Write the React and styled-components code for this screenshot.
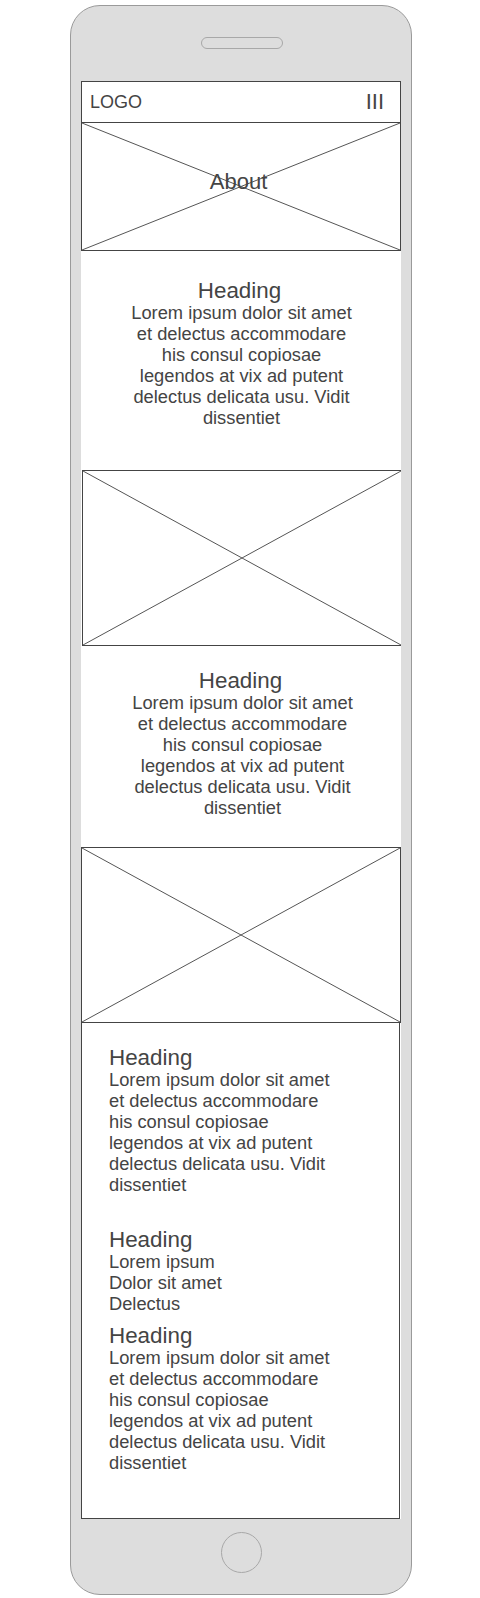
import React from "react";
import styled, { createGlobalStyle } from "styled-components";

const Global = createGlobalStyle`
  html, body { margin: 0; padding: 0; background: #ffffff; }
  body { font-family: "Liberation Sans", Arial, sans-serif; color: #444444; }
  * { box-sizing: border-box; }
`;

const Page = styled.div`
  padding: 5px 0 0 70px;
`;

const Phone = styled.div`
  width: 342px;
  height: 1590px;
  background: #dddddd;
  border: 1px solid #9a9a9a;
  border-radius: 30px;
  padding: 0 10px;
  display: flex;
  flex-direction: column;
  align-items: flex-start;
`;

const TopBezel = styled.div`
  height: 75px;
  width: 100%;
  display: flex;
  justify-content: center;
  padding-top: 31px;
  padding-left: 2px;
`;

const Speaker = styled.div`
  width: 82px;
  height: 12px;
  border: 1px solid #a8a8a8;
  border-radius: 6px;
  background: #dddddd;
`;

const Screen = styled.div`
  width: 320px;
  background: #ffffff;
  display: flex;
  flex-direction: column;
`;

const Header = styled.div`
  height: 41px;
  border: 1px solid #444444;
  border-bottom: none;
  display: flex;
  align-items: center;
  justify-content: space-between;
  padding: 0 16px 0 8px;
`;

const Logo = styled.span`
  font-size: 18px;
  color: #444444;
`;

const Burger = styled.span`
  font-size: 22px;
  color: #444444;
  line-height: 1;
`;

const ImageBox = styled.div`
  position: relative;
  height: ${(p) => p.$h}px;
  border: 1px solid #444444;
  border-top: ${(p) => (p.$noTop ? "none" : "1px solid #444444")};
  border-right: ${(p) => (p.$noRight ? "none" : "1px solid #444444")};
  margin-left: ${(p) => p.$offset || 0}px;
  display: flex;
  align-items: center;
  justify-content: center;
`;

const Cross = styled.svg`
  position: absolute;
  inset: 0;
  width: 100%;
  height: 100%;
`;

const HeroLabel = styled.span`
  position: relative;
  font-size: 22px;
  color: #444444;
  padding: 0 5px 9px 0;
`;

const Section = styled.div`
  padding: ${(p) => p.$pt}px 0 ${(p) => p.$pb}px ${(p) => p.$pl}px;
  display: flex;
  flex-direction: column;
  align-items: center;
  text-align: center;
`;

const Heading = styled.div`
  font-size: 22.4px;
  line-height: 23px;
  color: #444444;
  padding-right: ${(p) => p.$pr || 0}px;
`;

const Body = styled.div`
  font-size: 18.3px;
  line-height: 21px;
  color: #444444;
  max-width: 230px;
`;

const Panel = styled.div`
  width: 319px;
  height: 496px;
  border: 1px solid #444444;
  border-top: none;
  padding: 23px 0 0 27px;
  display: flex;
  flex-direction: column;
  align-items: flex-start;
`;

const Group = styled.div`
  margin-top: ${(p) => p.$mt || 0}px;
  display: flex;
  flex-direction: column;
  align-items: flex-start;
`;

const BottomBezel = styled.div`
  width: 100%;
  display: flex;
  justify-content: center;
  padding-top: 13px;
`;

const HomeButton = styled.div`
  width: 41px;
  height: 41px;
  border-radius: 50%;
  border: 1px solid #a8a8a8;
  background: #dddddd;
`;

const XMark = () => (
  <Cross viewBox="0 0 100 100" preserveAspectRatio="none">
    <line x1="0" y1="0" x2="100" y2="100" stroke="#555" strokeWidth="1" vectorEffect="non-scaling-stroke" />
    <line x1="100" y1="0" x2="0" y2="100" stroke="#555" strokeWidth="1" vectorEffect="non-scaling-stroke" />
  </Cross>
);

const LOREM = "Lorem ipsum dolor sit amet et delectus accommodare his consul copiosae legendos at vix ad putent delectus delicata usu. Vidit dissentiet";

export default function App() {
  return (
    <Page>
      <Global />
      <Phone>
        <TopBezel>
          <Speaker />
        </TopBezel>
        <Screen>
          <Header>
            <Logo>LOGO</Logo>
            <Burger>III</Burger>
          </Header>
          <ImageBox $h={129}>
            <XMark />
            <HeroLabel>About</HeroLabel>
          </ImageBox>
          <Section $pt={28} $pb={42} $pl={1}>
            <Heading $pr={4}>Heading</Heading>
            <Body>{LOREM}</Body>
          </Section>
          <ImageBox $h={176} $offset={1} $noRight>
            <XMark />
          </ImageBox>
          <Section $pt={23} $pb={29} $pl={3}>
            <Heading $pr={4}>Heading</Heading>
            <Body>{LOREM}</Body>
          </Section>
          <ImageBox $h={176}>
            <XMark />
          </ImageBox>
          <Panel>
            <Group>
              <Heading>Heading</Heading>
              <Body>{LOREM}</Body>
            </Group>
            <Group $mt={33}>
              <Heading>Heading</Heading>
              <Body>
                Lorem ipsum
                <br />
                Dolor sit amet
                <br />
                Delectus
              </Body>
            </Group>
            <Group $mt={10}>
              <Heading>Heading</Heading>
              <Body>{LOREM}</Body>
            </Group>
          </Panel>
        </Screen>
        <BottomBezel>
          <HomeButton />
        </BottomBezel>
      </Phone>
    </Page>
  );
}
